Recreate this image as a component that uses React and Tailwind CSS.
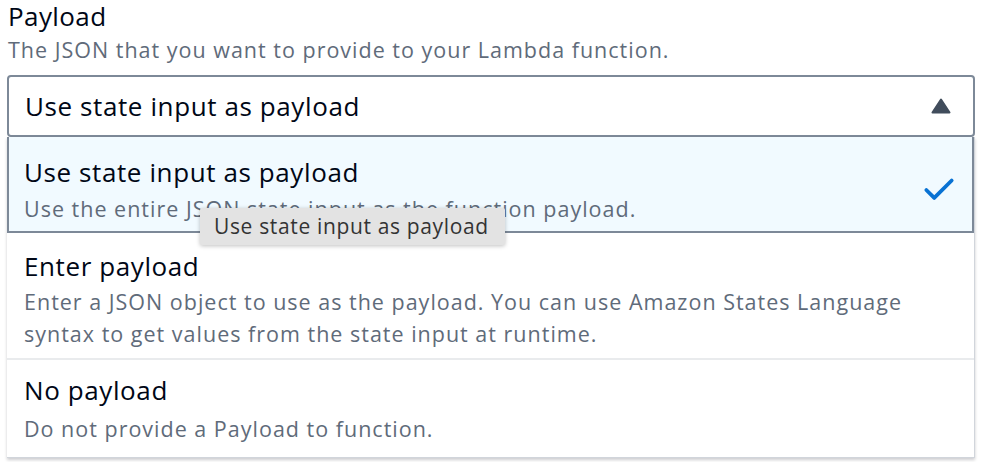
import { Check } from 'lucide-react'

const options = [
  {
    label: 'Use state input as payload',
    desc: 'Use the entire JSON state input as the function payload.',
    selected: true,
  },
  {
    label: 'Enter payload',
    desc: 'Enter a JSON object to use as the payload. You can use Amazon States Language syntax to get values from the state input at runtime.',
  },
  {
    label: 'No payload',
    desc: 'Do not provide a Payload to function.',
  },
]

export default function App() {
  return (
    <div
      className="w-[984px] h-[462px] bg-white overflow-hidden px-[7px] text-[#000716]"
      style={{ fontFamily: '"Open Sans", "Liberation Sans", sans-serif' }}
    >
      {/* Label */}
      <div className="pt-[1px] pl-[1px] text-[26px] leading-[30px] tracking-[0.4px]">Payload</div>
      <div className="mt-[6px] pl-[1px] text-[21.5px] leading-[26px] tracking-[1px] text-[#5f6b7a]">
        The JSON that you want to provide to your Lambda function.
      </div>

      {/* Select trigger */}
      <div className="mt-[12px] h-[62px] w-[968px] border-2 border-[#7d8998] rounded-[4px] flex items-center justify-between pl-[16px] pr-[22px]">
        <span className="text-[26px] leading-[30px] tracking-[0.6px]">Use state input as payload</span>
        <svg width="20" height="16" viewBox="0 0 20 16">
          <path d="M10 1.5 L18.5 14.5 H1.5 Z" fill="#414d5c" stroke="#414d5c" strokeWidth="2" strokeLinejoin="round" />
        </svg>
      </div>

      {/* Dropdown list */}
      <div className="relative w-[968px] bg-white border-r border-b border-[#d1d5db] shadow-[0_2px_3px_rgba(0,7,22,0.2)]">
        {options.map((o, i) => (
          <div
            key={o.label}
            className={
              o.selected
                ? 'flex items-start justify-between bg-[#f1faff] border-2 border-t-0 border-[#7d8998] pl-[15px] pr-[14px] pt-[19px] h-[96px]'
                : i === 1
                ? 'pl-[17px] pr-[16px] pt-[17px] h-[127px] border-b-2 border-[#e9ebed]'
                : 'pl-[17px] pr-[16px] pt-[14px] h-[97px]'
            }
          >
            <div>
              <div className="text-[26px] leading-[32px] tracking-[0.6px]">{o.label}</div>
              <div
                className={
                  (o.selected ? 'mt-[5px] ' : i === 1 ? 'mt-[4px] ' : 'mt-[7px] ') +
                  'text-[21.5px] leading-[32px] tracking-[1px] text-[#5f6b7a] max-w-[910px]'
                }
              >
                {o.desc}
              </div>
            </div>
            {o.selected && <Check className="mt-[15px] text-[#0972d3]" size={38} strokeWidth={2.4} />}
          </div>
        ))}

        {/* Tooltip */}
        <div className="absolute left-[193px] top-[71px] h-[37px] pl-[14px] pr-[16px] flex items-center bg-[#e3e3e3] text-[#333] text-[21px] tracking-[0.65px] rounded-[2px] shadow-[0_1px_4px_rgba(0,0,0,0.25)]">
          Use state input as payload
        </div>
      </div>
    </div>
  )
}
